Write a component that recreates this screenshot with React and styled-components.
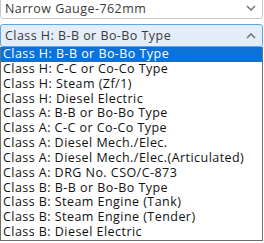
import React, { useState } from 'react'
import styled, { createGlobalStyle } from 'styled-components'

const GlobalStyle = createGlobalStyle`
  body {
    margin: 0;
    background: #fff;
    font-family: "Open Sans", "Noto Sans", sans-serif;
  }
`

const options = [
  'Class H: B-B or Bo-Bo Type',
  'Class H: C-C or Co-Co Type',
  'Class H: Steam (Zf/1)',
  'Class H: Diesel Electric',
  'Class A: B-B or Bo-Bo Type',
  'Class A: C-C or Co-Co Type',
  'Class A: Diesel Mech./Elec.',
  'Class A: Diesel Mech./Elec.(Articulated)',
  'Class A: DRG No. CSO/C-873',
  'Class B: B-B or Bo-Bo Type',
  'Class B: Steam Engine (Tank)',
  'Class B: Steam Engine (Tender)',
  'Class B: Diesel Electric',
]

const Page = styled.div`
  width: 263px;
  display: flex;
  flex-direction: column;
  margin-top: -3px;
`

const Select = styled.div`
  height: ${(p) => (p.open ? '21px' : '20px')};
  display: flex;
  align-items: center;
  justify-content: space-between;
  padding: 0 6px 0 4px;
  border: 1px solid ${(p) => (p.open ? '#5aa7ee' : '#c9c9c9')};
  border-radius: 3px;
  background: ${(p) => (p.open ? '#e4eefa' : '#fff')};
  color: #3a3a3a;
  font-size: 12.5px;
  letter-spacing: 0.45px;
  margin-bottom: ${(p) => (p.open ? '0' : '5px')};
`

const Chevron = ({ up }) => (
  <svg width="10" height="6" viewBox="0 0 10 6">
    <path
      d={up ? 'M1 5 L5 1 L9 5' : 'M1 1 L5 5 L9 1'}
      fill="none"
      stroke="#777"
      strokeWidth="1.6"
    />
  </svg>
)

const List = styled.ul`
  list-style: none;
  margin: 0;
  padding: 0;
  border: 1px solid #6e6e6e;
  border-top: none;
  background: #fff;
`

const Item = styled.li`
  height: 14.85px;
  line-height: 14.85px;
  padding-left: 2px;
  font-size: 12.5px;
  letter-spacing: 0.45px;
  color: ${(p) => (p.active ? '#fff' : '#111')};
  background: ${(p) => (p.active ? '#0a72d8' : 'transparent')};
  white-space: nowrap;
`

export default function App() {
  const [active, setActive] = useState(0)
  return (
    <>
      <GlobalStyle />
      <Page>
        <Select>
          <span>Narrow Gauge-762mm</span>
          <Chevron />
        </Select>
        <Select open>
          <span>{options[active]}</span>
          <Chevron up />
        </Select>
        <List>
          {options.map((o, i) => (
            <Item key={i} active={i === active} onMouseEnter={() => setActive(i)}>
              {o}
            </Item>
          ))}
        </List>
      </Page>
    </>
  )
}
